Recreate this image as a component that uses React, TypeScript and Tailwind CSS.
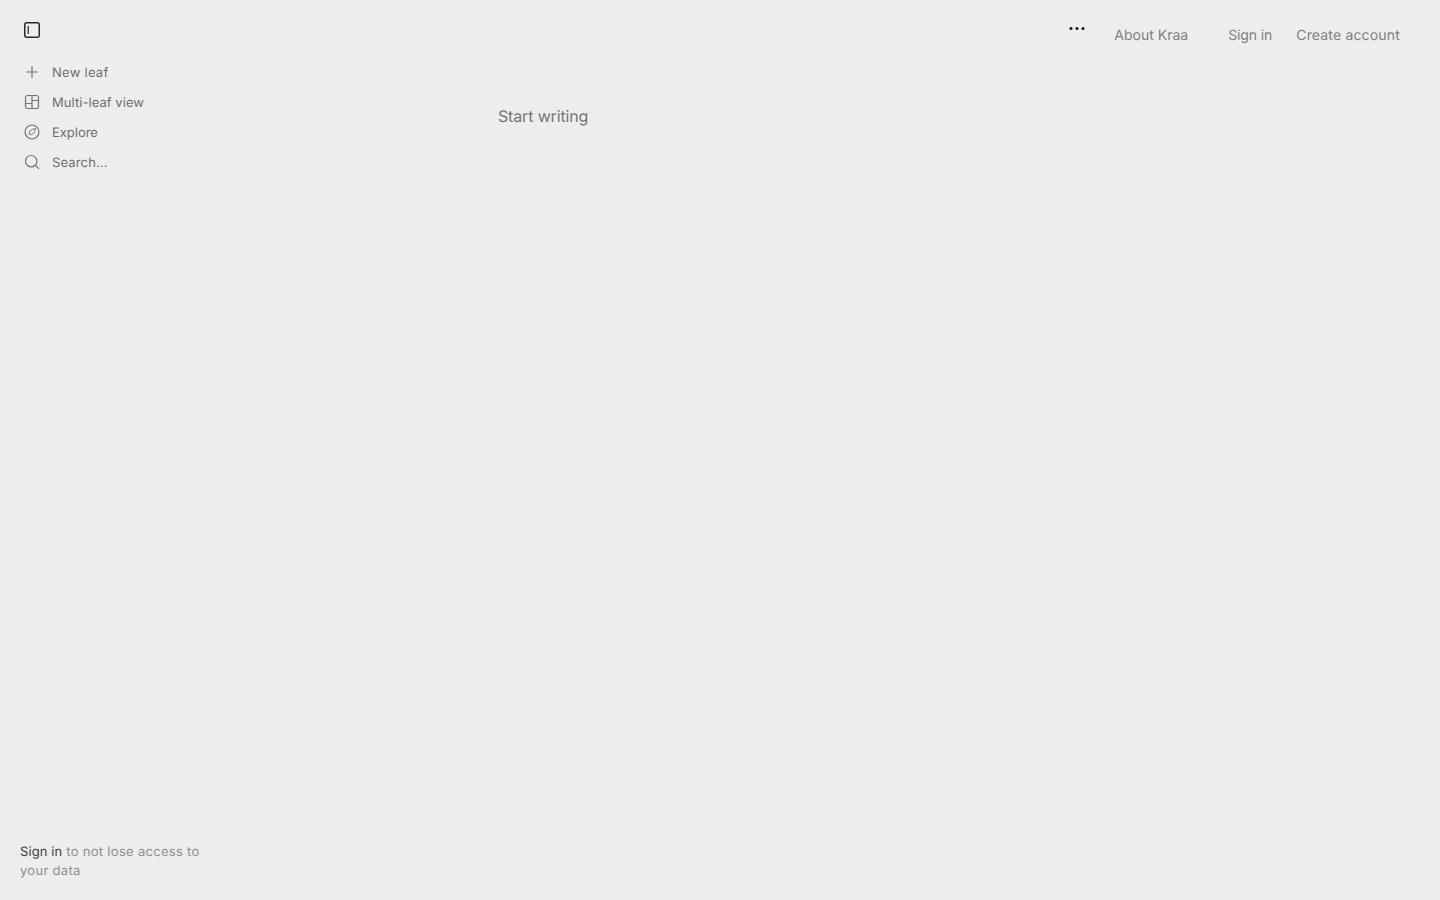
import React from "react";

const rows = [
  {
    label: "New leaf",
    track: "tracking-[0.26px]",
    icon: <path d="M8 2.5v11M2.5 8h11" />,
  },
  {
    label: "Multi-leaf view",
    track: "tracking-[0.05px]",
    icon: (
      <>
        <rect x="1.5" y="1.5" width="13" height="13" rx="2" />
        <path d="M8 1.5v13M1.5 9.5h6.5M8 6.5h6.5" />
      </>
    ),
  },
  {
    label: "Explore",
    track: "tracking-[-0.02px]",
    icon: (
      <>
        <circle cx="8" cy="8" r="7" />
        <path d="M11.2 4.8c.2 2.8-1.2 5.4-5 6-.6.1-1.2-.6-1.1-1.2.6-3.4 3.2-4.9 6.1-4.8z" strokeWidth="1" />
      </>
    ),
  },
  {
    label: "Search...",
    track: "tracking-[0.14px]",
    icon: (
      <>
        <circle cx="7.2" cy="7.2" r="5.7" />
        <path d="M11.4 11.4l3.3 3.3" />
      </>
    ),
  },
];

export default function App() {
  return (
    <div className="flex h-[900px] w-[1440px] overflow-hidden bg-[linear-gradient(to_bottom,#ededed_0px,#eeeeee_60px,#ededed_90px)] font-['Inter',sans-serif] antialiased [text-rendering:geometricPrecision]">
      <aside className="flex h-full w-[240px] shrink-0 flex-col justify-between pb-[19px]">
        <div>
          <div className="flex h-[57px] items-start pl-[23px] pt-[21px]">
            <svg width="18" height="18" viewBox="0 0 18 18" fill="none" stroke="#2a2a2a" strokeWidth="1.5">
              <rect x="1.75" y="1.75" width="14.5" height="14.5" rx="2" />
              <path d="M5.25 5v8" strokeWidth="1.2" />
            </svg>
          </div>
          <nav className="flex flex-col">
            {rows.map((r) => (
              <div key={r.label} className="flex h-[30px] items-center pl-[24px]">
                <svg width="16" height="16" viewBox="0 0 16 16" fill="none" stroke="#747474" strokeWidth="1.2" strokeLinecap="round" strokeLinejoin="round">
                  {r.icon}
                </svg>
                <span className={`ml-[12px] mt-[1px] text-[13px] leading-[20px] text-[#6e6e6e] ${r.track}`}>{r.label}</span>
              </div>
            ))}
          </nav>
        </div>
        <p className="w-[220px] pl-[20px] text-[13px] leading-[19px] tracking-[0.3px] text-[#8f8f8f]">
          <span className="tracking-[0.1px] text-[#3d3d3d]">Sign in</span> to not lose access to your data
        </p>
      </aside>
      <main className="flex min-w-0 flex-1 flex-col">
        <header className="flex h-[69px] items-start justify-end pr-[40px]">
          <svg className="mr-[28px] mt-[26px]" width="18" height="5" viewBox="0 0 18 5" fill="#111111">
            <circle cx="3" cy="2.5" r="1.5" />
            <circle cx="9" cy="2.5" r="1.5" />
            <circle cx="15" cy="2.5" r="1.5" />
          </svg>
          <nav className="mt-[26px] flex text-[14px] leading-[20px] text-[#808080]">
            <span>About Kraa</span>
            <span className="ml-[40px] tracking-[-0.1px]">Sign in</span>
            <span className="ml-[24px] tracking-[0.17px]">Create account</span>
          </nav>
        </header>
        <div className="pl-[258px] pt-[35px] text-[16px] leading-[24px] tracking-[-0.15px] text-[#757575]">Start writing</div>
      </main>
    </div>
  );
}
